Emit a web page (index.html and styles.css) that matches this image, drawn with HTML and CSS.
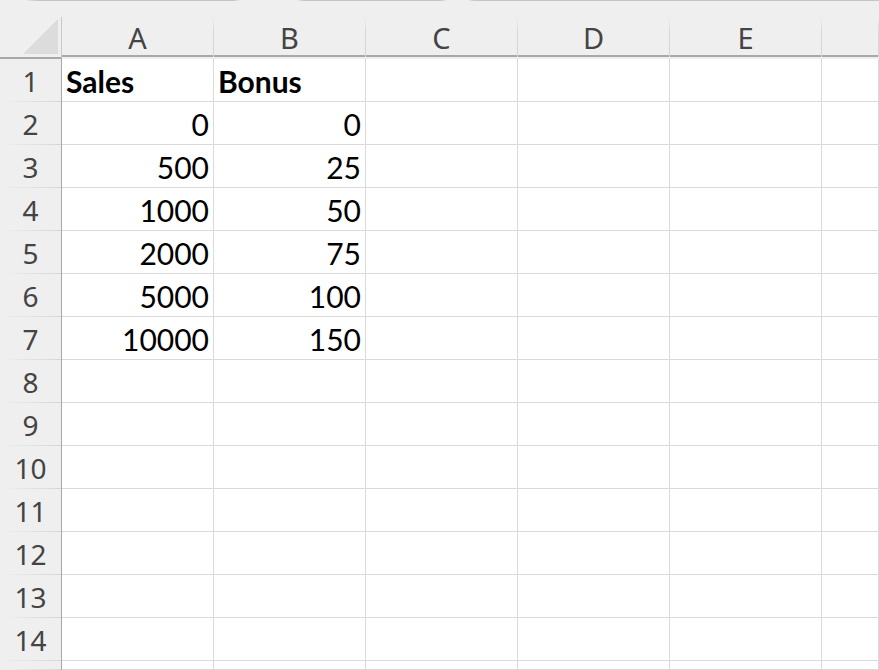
FILE: index.html
```html
<!DOCTYPE html>
<html>
<head>
	<title>Book1</title>
	<meta charset="utf-8">
	<link rel="stylesheet" href="styles.css">
</head>
<body>

	<div id="top-strip">
		<div class="tab-line first"></div>
		<div class="tab-line second"></div>
		<div class="tab-line rest"></div>
	</div>

	<div id="sheet">

		<div class="corner"><div class="select-all"></div></div>
		<div class="col-head">A</div>
		<div class="col-head">B</div>
		<div class="col-head">C</div>
		<div class="col-head">D</div>
		<div class="col-head">E</div>
		<div class="col-head"></div>

		<div class="row-head">1</div>
		<div class="cell text bold">Sales</div>
		<div class="cell text bold">Bonus</div>
		<div class="cell"></div><div class="cell"></div><div class="cell"></div><div class="cell"></div>

		<div class="row-head">2</div>
		<div class="cell num">0</div>
		<div class="cell num">0</div>
		<div class="cell"></div><div class="cell"></div><div class="cell"></div><div class="cell"></div>

		<div class="row-head">3</div>
		<div class="cell num">500</div>
		<div class="cell num">25</div>
		<div class="cell"></div><div class="cell"></div><div class="cell"></div><div class="cell"></div>

		<div class="row-head">4</div>
		<div class="cell num">1000</div>
		<div class="cell num">50</div>
		<div class="cell"></div><div class="cell"></div><div class="cell"></div><div class="cell"></div>

		<div class="row-head">5</div>
		<div class="cell num">2000</div>
		<div class="cell num">75</div>
		<div class="cell"></div><div class="cell"></div><div class="cell"></div><div class="cell"></div>

		<div class="row-head">6</div>
		<div class="cell num">5000</div>
		<div class="cell num">100</div>
		<div class="cell"></div><div class="cell"></div><div class="cell"></div><div class="cell"></div>

		<div class="row-head">7</div>
		<div class="cell num">10000</div>
		<div class="cell num">150</div>
		<div class="cell"></div><div class="cell"></div><div class="cell"></div><div class="cell"></div>

		<div class="row-head">8</div>
		<div class="cell"></div><div class="cell"></div><div class="cell"></div><div class="cell"></div><div class="cell"></div><div class="cell"></div>

		<div class="row-head">9</div>
		<div class="cell"></div><div class="cell"></div><div class="cell"></div><div class="cell"></div><div class="cell"></div><div class="cell"></div>

		<div class="row-head">10</div>
		<div class="cell"></div><div class="cell"></div><div class="cell"></div><div class="cell"></div><div class="cell"></div><div class="cell"></div>

		<div class="row-head">11</div>
		<div class="cell"></div><div class="cell"></div><div class="cell"></div><div class="cell"></div><div class="cell"></div><div class="cell"></div>

		<div class="row-head">12</div>
		<div class="cell"></div><div class="cell"></div><div class="cell"></div><div class="cell"></div><div class="cell"></div><div class="cell"></div>

		<div class="row-head">13</div>
		<div class="cell"></div><div class="cell"></div><div class="cell"></div><div class="cell"></div><div class="cell"></div><div class="cell"></div>

		<div class="row-head">14</div>
		<div class="cell"></div><div class="cell"></div><div class="cell"></div><div class="cell"></div><div class="cell"></div><div class="cell"></div>

		<!-- only the top few pixels of row 15 fit in the window -->
		<div class="row-head"></div>
		<div class="cell"></div><div class="cell"></div><div class="cell"></div><div class="cell"></div><div class="cell"></div><div class="cell"></div>

	</div>

</body>
</html>
```

FILE: styles.css
```css
* {
	margin: 0;
	padding: 0;
	box-sizing: border-box;
}

body {
	width: 879px;
	height: 670px;
	overflow: hidden;
	background-color: #ffffff;
}

#top-strip {
	display: flex;
	height: 17px;
	background-color: #efefef;
}

	.tab-line {
		height: 1px;
		background-color: #c6c6c6;
	}

	.tab-line.first {
		margin-left: 25px;
		width: 215px;
		background: linear-gradient(to right, #efefef, #c6c6c6 12px, #c6c6c6 calc(100% - 6px), #efefef);
	}

	.tab-line.second {
		margin-left: 57px;
		width: 150px;
		background: linear-gradient(to right, #efefef, #c6c6c6 6px, #c6c6c6 calc(100% - 6px), #efefef);
	}

	.tab-line.rest {
		margin-left: 21px;
		flex: 1;
		background: linear-gradient(to right, #efefef, #c6c6c6 6px);
	}

#sheet {
	display: grid;
	grid-template-columns: 62px repeat(5, 152px) 57px;
	grid-template-rows: 42px repeat(14, 43px) 9px;
	width: 879px;
	height: 653px;
	overflow: hidden;
}

	.corner {
		display: flex;
		justify-content: flex-end;
		align-items: flex-end;
		padding: 0 3px 3px 0;
		background-color: #efefef;
		border-right: 1px solid #c8c8c8;
		border-bottom: 2px solid #a8a8a8;
	}

		.select-all {
			width: 35px;
			height: 35px;
			background-color: #dcdcdc;
			clip-path: polygon(100% 0, 100% 100%, 0 100%);
		}

	.col-head {
		display: flex;
		justify-content: center;
		align-items: flex-end;
		padding-bottom: 5px;
		background-color: #efefef;
		border-right: 1px solid;
		border-bottom: 2px solid #a8a8a8;
		border-image: linear-gradient(#efefef, #d6d6d6 40%) 0 1 0 0;
		box-shadow: inset 0 -2px 0 #a8a8a8;
		font-family: "Noto Sans", "Open Sans", sans-serif;
		font-size: 29px;
		line-height: 1;
		color: #444444;
	}

	.row-head {
		display: flex;
		justify-content: center;
		align-items: flex-end;
		padding-bottom: 7px;
		background:
			linear-gradient(to right, #efefef, #d6d6d6) bottom / 100% 1px no-repeat,
			#efefef;
		border-right: 1px solid #a8a8a8;
		font-family: "Noto Sans", "Open Sans", sans-serif;
		font-size: 28px;
		line-height: 1;
		color: #444444;
	}

	.cell {
		display: flex;
		align-items: flex-end;
		padding: 0 4px 5px 4px;
		border-right: 1px solid #dadada;
		border-bottom: 1px solid #dadada;
		font-family: Lato, "Liberation Sans", sans-serif;
		font-size: 30px;
		line-height: 1;
		color: #000000;
	}

		.num {
			justify-content: flex-end;
		}

		.bold {
			font-weight: bold;
		}
```
